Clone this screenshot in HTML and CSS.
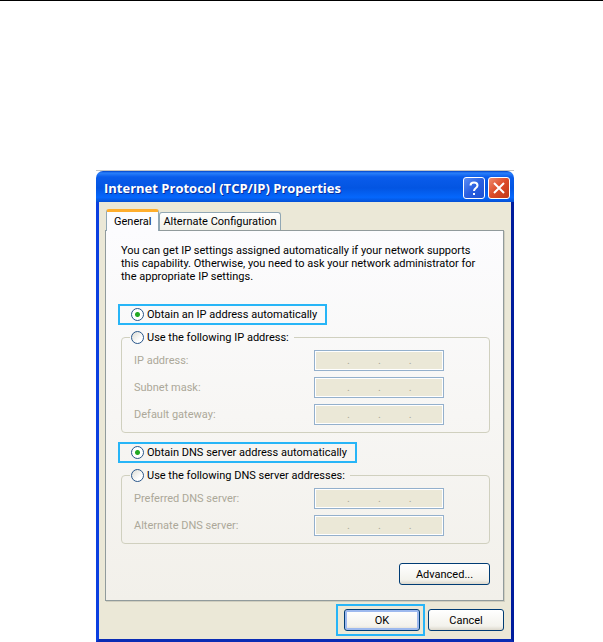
FILE: index.html
```html
<!DOCTYPE html>
<html lang="en">
<head>
  <meta charset="UTF-8" />
  <title>Internet Protocol (TCP/IP) Properties</title>
  <meta name="viewport" content="width=device-width, initial-scale=1.0" />
  <link rel="stylesheet" href="styles.css">
</head>
<body>

  <div class="page">
    <div class="dialog">
      <div class="titlebar">
        <h1>Internet Protocol (TCP/IP) Properties</h1>
        <button type="button" class="caption-btn help" aria-label="Help">
          <svg viewBox="0 0 20 20"><path d="M6.5 7.5C6.5 3.5 13.5 3.5 13.5 7.5C13.5 10 10 10 10 13" /><path d="M10 15v2" /></svg>
        </button>
        <button type="button" class="caption-btn close" aria-label="Close">
          <svg viewBox="0 0 20 20"><path d="M5 5l10 10M15 5L5 15" /></svg>
        </button>
      </div>

      <div class="content">
        <div class="tabs" role="tablist">
          <button type="button" class="tab active" role="tab" aria-selected="true">General</button>
          <button type="button" class="tab" role="tab" aria-selected="false">Alternate Configuration</button>
        </div>

        <form class="panel" id="tcpip">
          <p class="intro">You can get IP settings assigned automatically if your network supports<br>this capability. Otherwise, you need to ask your network administrator for<br>the appropriate IP settings.</p>

          <!-- IP address -->
          <label class="option marked"><input type="radio" name="ip" checked>Obtain an IP address automatically</label>
          <fieldset>
            <legend><label class="option"><input type="radio" name="ip">Use the following IP address:</label></legend>
            <div class="row">
              <label for="ip1">IP address:</label>
              <div class="ip-field">
                <input type="text" id="ip1" disabled>.<input type="text" aria-label="IP address part 2" disabled>.<input type="text" aria-label="IP address part 3" disabled>.<input type="text" aria-label="IP address part 4" disabled>
              </div>
            </div>
            <div class="row">
              <label for="mask1">Subnet mask:</label>
              <div class="ip-field">
                <input type="text" id="mask1" disabled>.<input type="text" aria-label="Subnet mask part 2" disabled>.<input type="text" aria-label="Subnet mask part 3" disabled>.<input type="text" aria-label="Subnet mask part 4" disabled>
              </div>
            </div>
            <div class="row">
              <label for="gw1">Default gateway:</label>
              <div class="ip-field">
                <input type="text" id="gw1" disabled>.<input type="text" aria-label="Default gateway part 2" disabled>.<input type="text" aria-label="Default gateway part 3" disabled>.<input type="text" aria-label="Default gateway part 4" disabled>
              </div>
            </div>
          </fieldset>

          <!-- DNS -->
          <label class="option marked dns"><input type="radio" name="dns" checked>Obtain DNS server address automatically</label>
          <fieldset>
            <legend><label class="option"><input type="radio" name="dns">Use the following DNS server addresses:</label></legend>
            <div class="row">
              <label for="dns1">Preferred DNS server:</label>
              <div class="ip-field">
                <input type="text" id="dns1" disabled>.<input type="text" aria-label="Preferred DNS part 2" disabled>.<input type="text" aria-label="Preferred DNS part 3" disabled>.<input type="text" aria-label="Preferred DNS part 4" disabled>
              </div>
            </div>
            <div class="row">
              <label for="alt1">Alternate DNS server:</label>
              <div class="ip-field">
                <input type="text" id="alt1" disabled>.<input type="text" aria-label="Alternate DNS part 2" disabled>.<input type="text" aria-label="Alternate DNS part 3" disabled>.<input type="text" aria-label="Alternate DNS part 4" disabled>
              </div>
            </div>
          </fieldset>

          <button type="button" class="btn advanced">Advanced...</button>
        </form>

        <div class="actions">
          <div class="marked-btn"><button type="submit" form="tcpip" class="btn default">OK</button></div>
          <button type="button" class="btn">Cancel</button>
        </div>
      </div>
    </div>
  </div>

</body>
</html>
```
FILE: styles.css
```css
* { box-sizing: border-box; }
body {
  margin: 0;
  background: #fff;
  color: #000;
  font: 11px/13px Roboto, "Liberation Sans", sans-serif;
}
button, input { font: inherit; }
.page {
  border-top: 1px solid #000;
  padding: 169px 89px 0 96px;
}
.dialog { border-top: 1px solid #c4c4c4; }

/* title bar */
.titlebar {
  display: flex;
  align-items: center;
  gap: 3px;
  height: 31px;
  padding: 2px 4px 0 8px;
  border-radius: 7px 7px 0 0;
  background: linear-gradient(#0042c8, #2a80fb 2px, #0a5ceb 6px, #0355e2 55%, #0567fc 85%, #0450d5);
}
h1 {
  flex: 1;
  margin: 0;
  color: #fff;
  font: bold 13px/16px "Open Sans", sans-serif;
  text-shadow: 1px 1px #0a2f9c;
}
.caption-btn {
  width: 22px;
  height: 22px;
  padding: 0;
  border: 1px solid #fff;
  border-radius: 3px;
}
.caption-btn svg {
  display: block;
  width: 20px;
  height: 20px;
  fill: none;
  stroke: #fff;
  stroke-width: 2;
}
.help { background: linear-gradient(135deg, #5c8df5, #2a5fe0 50%, #1d50d0); }
.close { background: linear-gradient(135deg, #ee8a6c, #dc4a28 50%, #c03818); }

.content {
  padding: 7px 7px 3px 6px;
  border: solid #0a3fe0;
  border-width: 0 3px 3px;
  border-right-color: #001c9c;
  border-bottom-color: #0a2cb4;
  background: #ebe8d7;
}

/* tabs */
.tabs {
  display: flex;
  align-items: flex-end;
  padding-left: 1px;
}
.tab {
  height: 18px;
  padding: 0 3px;
  border: 1px solid #91a7b4;
  border-bottom: 0;
  border-radius: 3px 3px 0 0;
  background: linear-gradient(#fff, #f0efe6);
}
.tab.active {
  position: relative;
  height: 22px;
  margin-bottom: -1px;
  padding: 0 7px;
  border-top: 3px solid #ffae2c;
  background: #fcfcfe;
}

.panel {
  padding: 13px 13px 15px 12px;
  border: 1px solid #919b9c;
  background: linear-gradient(#fcfcfe, #f2f0ea);
  box-shadow: 1px 1px #d0cebf;
}
.intro {
  margin: 0 0 21px 3px;
  white-space: nowrap;
}
.option {
  display: flex;
  align-items: center;
  gap: 3px;
}
.option input {
  appearance: none;
  flex: none;
  width: 13px;
  height: 13px;
  margin: 0;
  border: 1px solid #28568a;
  border-radius: 50%;
  background: linear-gradient(135deg, #dcdcd4, #fff 70%);
}
.option input:checked {
  background: radial-gradient(circle, #22a822 2px, #fff 3px);
}
.marked {
  width: fit-content;
  height: 21px;
  padding: 0 8px 0 11px;
  border: 2px solid #27b5f7;
}
.dns { margin-top: 9px; }

fieldset {
  margin: 5px 0 0 3px;
  padding: 6px 45px 7px 8px;
  border: 1px solid #d0d0bf;
  border-radius: 4px;
}
legend { padding: 0 5px 0 1px; }
legend .option { height: 14px; }
.row {
  display: flex;
  align-items: center;
  justify-content: space-between;
  padding-left: 4px;
  color: #aca899;
}
.row + .row { margin-top: 6px; }
.ip-field {
  display: flex;
  width: 130px;
  height: 21px;
  padding: 1px 1px 1px 4px;
  border: 1px solid #94b0cc;
  background: #ebe8d7;
  box-shadow: inset 0 0 0 1px #fff;
  line-height: 17px;
}
.ip-field input {
  width: 28px;
  min-width: 0;
  padding: 0;
  border: 0;
  background: none;
  text-align: center;
}

/* buttons */
.btn {
  width: 76px;
  height: 22px;
  padding: 0;
  border: 1px solid #003c74;
  border-radius: 3px;
  background: linear-gradient(#fff, #f3f2ec 80%, #dcd8cc);
}
.btn.default { box-shadow: inset 0 0 0 2px #9db9ee; }
.advanced {
  display: block;
  width: 91px;
  margin: 19px 0 0 auto;
}
.actions {
  display: flex;
  align-items: center;
  justify-content: flex-end;
  gap: 3px;
  margin-top: 3px;
}
.marked-btn {
  padding: 3px 3px 3px 6px;
  border: 2px solid #27b5f7;
}
```
